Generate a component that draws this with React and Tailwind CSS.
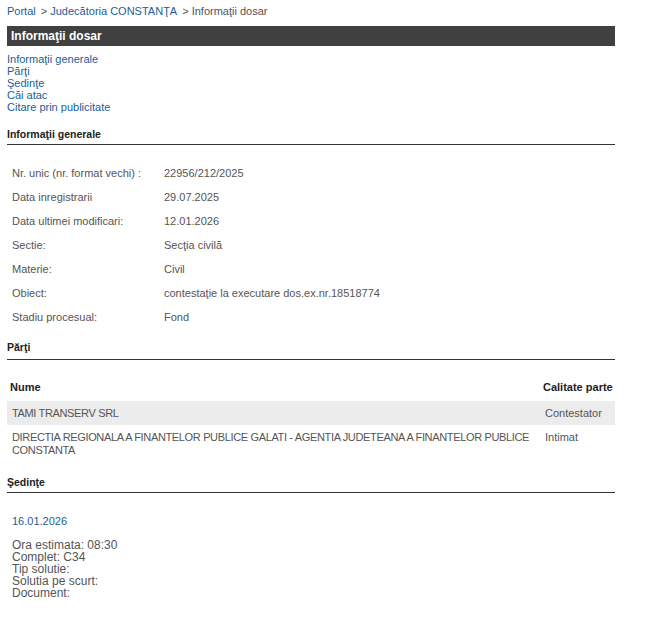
import React from "react";

const info = [
  ["Nr. unic (nr. format vechi) :", "22956/212/2025"],
  ["Data inregistrarii", "29.07.2025"],
  ["Data ultimei modificari:", "12.01.2026"],
  ["Sectie:", "Secţia civilă"],
  ["Materie:", "Civil"],
  ["Obiect:", "contestaţie la executare dos.ex.nr.18518774"],
  ["Stadiu procesual:", "Fond"],
];

const parti = [
  { nume: "TAMI TRANSERV SRL", calitate: "Contestator", shade: true },
  {
    nume: "DIRECTIA REGIONALA A FINANTELOR PUBLICE GALATI - AGENTIA JUDETEANA A FINANTELOR PUBLICE CONSTANTA",
    calitate: "Intimat",
    shade: false,
  },
];

function SectionHeader({ children, pb = "pb-[4px]", mt }) {
  return (
    <div className={`${mt} ${pb} border-b border-[#333] text-[10.5px] leading-[12px] font-bold text-[#222]`}>
      {children}
    </div>
  );
}

export default function App() {
  return (
    <div className="min-h-[617px] bg-white font-['Liberation_Sans',Arial,sans-serif] text-[11px]">
      <div className="w-[608px] ml-[7px] pt-[5px]">
        {/* breadcrumb */}
        <div className="leading-[12px] text-[#555] flex gap-[5px]">
          <span className="text-[#215d9a]">Portal</span>
          <span>
            {">"} <span className="text-[#215d9a]">Judecătoria CONSTANŢA</span>
          </span>
          <span>{">"} Informaţii dosar</span>
        </div>

        {/* title bar */}
        <div className="mt-[9px] h-[20px] bg-[#404040] px-[4px] text-white text-[12px] font-bold leading-[20px]">
          Informaţii dosar
        </div>

        {/* nav */}
        <div className="mt-[7px] flex flex-col leading-[12px] text-[#215d9a]">
          <a>Informaţii generale</a>
          <a>Părţi</a>
          <a>Şedinţe</a>
          <a>Căi atac</a>
          <a>Citare prin publicitate</a>
        </div>

        <SectionHeader mt="mt-[15px]">Informaţii generale</SectionHeader>

        <div className="mt-[16px] text-[#555]">
          {info.map(([k, v]) => (
            <div key={k} className="h-[24px] flex items-center pl-[5px]">
              <div className="w-[152px] shrink-0">{k}</div>
              <div>{v}</div>
            </div>
          ))}
        </div>

        <SectionHeader mt="mt-[12px]" pb="pb-[6px]">Părţi</SectionHeader>

        <div className="mt-[15px]">
          <div className="h-[24px] flex items-center text-[11px] font-bold text-[#222]">
            <div className="flex-1 pl-[3px]">Nume</div>
            <div className="w-[74px] pl-[2px] whitespace-nowrap">Calitate parte</div>
          </div>
          <div className="mt-[2px]">
            {parti.map((p) => (
              <div
                key={p.nume}
                className={`flex text-[#555] leading-[13px] ${p.shade ? "bg-[#ececec] items-center h-[24px]" : "py-[6px]"}`}
              >
                <div className="flex-1 pl-[5px] tracking-[-0.35px]">{p.nume}</div>
                <div className="w-[74px] pl-[4px]">{p.calitate}</div>
              </div>
            ))}
          </div>
        </div>

        <SectionHeader mt="mt-[13px]">Şedinţe</SectionHeader>

        <div className="mt-[21px] pl-[5px] text-[11px] leading-[14px] text-[#215d9a]">16.01.2026</div>
        <div className="mt-[11px] pl-[5px] text-[12px] leading-[12px] text-[#555] flex flex-col">
          <span>Ora estimata: 08:30</span>
          <span>Complet: C34</span>
          <span>Tip solutie:</span>
          <span>Solutia pe scurt:</span>
          <span>Document:</span>
        </div>
      </div>
    </div>
  );
}
